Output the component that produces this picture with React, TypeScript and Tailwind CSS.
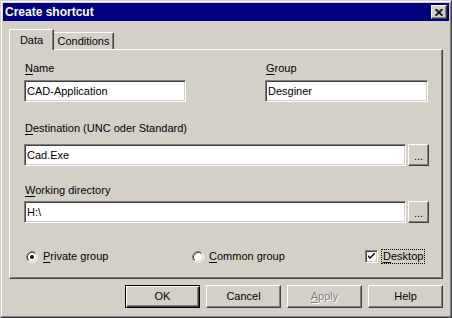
const raised =
  "border border-t-white border-l-white border-r-[#404040] border-b-[#404040] shadow-[inset_-1px_-1px_0_#808080]";
const sunken =
  "border border-t-[#808080] border-l-[#808080] border-r-white border-b-white shadow-[inset_1px_1px_0_#404040,inset_-1px_-1px_0_#d4d0c8]";

function Label({ u, rest }: { u: string; rest: string }) {
  return (
    <div className="h-[13px] leading-[13px] pl-px whitespace-nowrap">
      <span className="underline underline-offset-[2px]">{u}</span>
      {rest}
    </div>
  );
}

function Field({ value, w }: { value: string; w: string }) {
  return (
    <div className={`${sunken} ${w} h-[22px] bg-white flex items-center pl-[2px] leading-[13px]`}>
      {value}
    </div>
  );
}

function Browse() {
  return (
    <div className={`${raised} w-[21px] h-[22px] ml-[2px] flex items-end justify-center pb-[3px] leading-none`}>
      ...
    </div>
  );
}

function Radio({ checked }: { checked?: boolean }) {
  return (
    <svg width="12" height="12" viewBox="0 0 12 12" className="shrink-0">
      <circle cx="6" cy="6" r="4.5" fill="#fff" />
      <path d="M2.11 9.89 A5.5 5.5 0 0 1 9.89 2.11" fill="none" stroke="#808080" />
      <path d="M9.89 2.11 A5.5 5.5 0 0 1 2.11 9.89" fill="none" stroke="#fff" />
      <path d="M2.82 9.18 A4.5 4.5 0 0 1 9.18 2.82" fill="none" stroke="#404040" />
      <path d="M9.18 2.82 A4.5 4.5 0 0 1 2.82 9.18" fill="none" stroke="#d4d0c8" />
      {checked && <circle cx="6" cy="6" r="2" fill="#000" />}
    </svg>
  );
}

function Button({
  label,
  def,
  disabled,
}: {
  label: React.ReactNode;
  def?: boolean;
  disabled?: boolean;
}) {
  const frame = def
    ? "border border-black shadow-[inset_1px_1px_0_#fff,inset_-1px_-1px_0_#404040,inset_-2px_-2px_0_#808080]"
    : raised;
  return (
    <div
      className={`${frame} w-[75px] h-[23px] flex items-center justify-center leading-[13px] ${
        disabled ? "text-[#808080] [text-shadow:1px_1px_0_#fff]" : ""
      }`}
    >
      {label}
    </div>
  );
}

export default function App() {
  return (
    <div className="w-[452px] h-[318px] bg-[#d4d0c8] text-black text-[11px] font-['Liberation_Sans',Arial,sans-serif] border border-t-[#d4d0c8] border-l-[#d4d0c8] border-r-[#404040] border-b-[#404040]">
      <div className="h-full border border-t-white border-l-white border-r-[#808080] border-b-[#808080] p-px flex flex-col">
        {/* title bar */}
        <div className="h-[18px] bg-[#000080] flex items-center justify-between pl-[2px] pr-[2px]">
          <span className="text-white font-bold text-[12px] leading-[14px]">Create shortcut</span>
          <div className={`${raised} bg-[#d4d0c8] w-[16px] h-[14px] flex items-center justify-center`}>
            <svg width="8" height="7" viewBox="0 0 8 7">
              <path d="M0.5 0 L7.5 7 M1.5 0 L7.5 6 M0 0.5 L7 7 M7.5 0 L0.5 7 M6.5 0 L0.5 6 M8 0.5 L1 7" stroke="#000" strokeWidth="1" />
            </svg>
          </div>
        </div>

        <div className="px-[6px] mt-[8px]">
          {/* tabs */}
          <div className="relative z-10 flex items-end h-[21px] -mb-px">
            <div className="w-[45px] h-[21px] bg-[#d4d0c8] border-t border-l border-r border-t-white border-l-white border-r-[#404040] shadow-[inset_-1px_0_0_#808080] rounded-tl-[2px] flex justify-center pt-[4px] leading-[13px]">
              Data
            </div>
            <div className="w-[60px] h-[17px] mb-px border-t border-r border-t-white border-r-[#404040] shadow-[inset_-1px_0_0_#808080] rounded-tr-[2px] flex justify-center pt-[2px] leading-[13px]">
              Conditions
            </div>
          </div>

          {/* panel */}
          <div className={`${raised} h-[230px] pl-[14px] pt-[12px]`}>
            <div className="flex">
              <div className="w-[241px]">
                <Label u="N" rest="ame" />
                <div className="mt-[5px]">
                  <Field value="CAD-Application" w="w-[162px]" />
                </div>
              </div>
              <div>
                <Label u="G" rest="roup" />
                <div className="mt-[5px]">
                  <Field value="Desginer" w="w-[163px]" />
                </div>
              </div>
            </div>

            <div className="mt-[20px]">
              <Label u="D" rest="estination (UNC oder Standard)" />
              <div className="mt-[9px] flex">
                <Field value="Cad.Exe" w="w-[382px]" />
                <Browse />
              </div>
            </div>

            <div className="mt-[18px]">
              <Label u="W" rest="orking directory" />
              <div className="mt-[4px] flex">
                <Field value="H:\" w="w-[382px]" />
                <Browse />
              </div>
            </div>

            <div className="mt-[26px] flex items-center h-[15px]">
              <div className="w-[168px] flex items-center pl-[2px] gap-[5px]">
                <Radio checked />
                <span className="leading-[13px]">
                  <span className="underline underline-offset-[2px]">P</span>rivate group
                </span>
              </div>
              <div className="w-[173px] flex items-center gap-[5px]">
                <Radio />
                <span className="leading-[13px]">
                  <span className="underline underline-offset-[2px]">C</span>ommon group
                </span>
              </div>
              <div className="flex items-center gap-[3px]">
                <div className={`${sunken} w-[13px] h-[13px] bg-white flex items-center justify-center`}>
                  <svg width="7" height="7" viewBox="0 0 7 7">
                    <path d="M0 2 L0 4 L2 6 L7 1 L7 -1 L2 4 Z" fill="#000" />
                  </svg>
                </div>
                <span className="border border-dotted border-black px-px h-[15px] leading-[13px]">
                  <span className="underline underline-offset-[2px]">D</span>esktop
                </span>
              </div>
            </div>
          </div>

          {/* buttons */}
          <div className="mt-[6px] flex justify-end gap-[6px]">
            <Button label="OK" def />
            <Button label="Cancel" />
            <Button
              label={
                <>
                  <span className="underline underline-offset-[2px]">A</span>pply
                </>
              }
              disabled
            />
            <Button label="Help" />
          </div>
        </div>
      </div>
    </div>
  );
}
